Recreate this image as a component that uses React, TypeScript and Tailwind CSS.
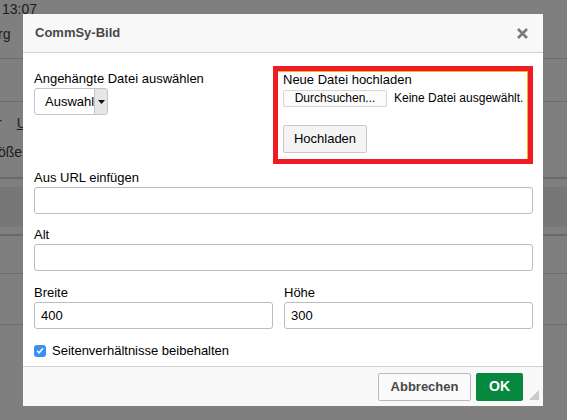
import React from "react";

function Field({ label, value, className = "" }: { label: string; value?: string; className?: string }) {
  return (
    <div className={className}>
      <div className="h-[15px] leading-[15px] text-[13px] text-black">{label}</div>
      <div className="mt-[2px] flex h-[27px] items-center rounded-[3px] border border-[#bcbcbc] bg-white px-[6px] text-[13px] text-black">
        {value}
      </div>
    </div>
  );
}

export default function App() {
  return (
    <div
      className="relative h-[420px] w-[567px] overflow-hidden bg-[#7f7f7f]"
      style={{ fontFamily: '"Liberation Sans", Arial, sans-serif' }}
    >
      {/* page behind the overlay */}
      <div className="flex flex-col text-[13px] text-[#1c1c1c]">
        <div className="h-[58px] pl-[2px]">
          <div className="text-[14px] leading-[16px] pt-[1px]">13:07</div>
          <div className="mt-[9px] -ml-[4px] text-[14px] leading-[16px]">rg</div>
        </div>
        <div className="h-px bg-[#6a6a6a]" />
        <div className="h-[42px]" />
        <div className="h-px bg-[#6a6a6a]" />
        <div className="h-[75px]">
          <div className="mt-[16px] flex h-[16px] items-end text-[14px]">
            <span className="-ml-[3px]">r</span>
            <span className="ml-[15px] underline">U</span>
          </div>
          <div className="mt-[8px] -ml-[2px] text-[14px]">öße</div>
        </div>
        <div className="h-[2px] bg-[#6a6a6a]" />
        <div className="h-[8px]" />
        <div className="h-[40px] bg-[#777777]" />
        <div className="h-[7px]" />
        <div className="h-[2px] bg-[#6a6a6a]" />
        <div className="h-[37px]" />
        <div className="h-px bg-[#6a6a6a]" />
        <div className="h-[50px]" />
        <div className="h-px bg-[#6a6a6a]" />
      </div>

      {/* dialog */}
      <div className="absolute left-[23px] top-[14px] flex h-[392px] w-[520px] flex-col bg-white">
        <div className="flex h-[39px] shrink-0 items-center justify-between border-b border-[#d1d1d1] bg-[#f8f8f8] pl-[12px] pr-[15px]">
          <span className="text-[13px] font-bold text-[#484848]">CommSy-Bild</span>
          <svg width="11" height="11" viewBox="0 0 11 11">
            <path d="M1 1 L10 10 M10 1 L1 10" stroke="#7a7a7a" strokeWidth="2.6" />
          </svg>
        </div>

        <div className="flex-1 pl-[11px] pr-[10px] pt-[13px]">
          <div className="grid grid-cols-[239px_260px]">
            <div className="pt-[5px]">
              <div className="h-[15px] leading-[15px] text-[13px] text-black">Angehängte Datei auswählen</div>
              <div className="mt-[2px] flex h-[27px] w-[74px] overflow-hidden rounded-[3px] border border-[#c4c4c4] bg-white text-[13px] text-black">
                <div className="flex flex-1 items-center pl-[10px]">Auswahl</div>
                <div className="flex w-[13px] items-center justify-center border-l border-[#c4c4c4] bg-[#e6e6e6]">
                  <svg width="7" height="4" viewBox="0 0 7 4">
                    <path d="M0 0 H7 L3.5 4 Z" fill="#111" />
                  </svg>
                </div>
              </div>
            </div>

            <div className="border-[5px] border-[#ee1c25]">
              <div className="border-t border-r border-[#f3b820] pl-[5px] pb-[6px]">
                <div className="h-[15px] leading-[15px] text-[13px] text-black">Neue Datei hochladen</div>
                <div className="mt-[2px] flex items-center gap-[7px]">
                  <div className="flex h-[17px] w-[104px] items-center justify-center rounded-[2px] border border-[#d6d6d6] bg-[#fbfbfb] text-[12px] text-black">
                    Durchsuchen...
                  </div>
                  <span className="text-[12px] text-black">Keine Datei ausgewählt.</span>
                </div>
                <div className="mt-[18px] flex h-[28px] w-[84px] items-center justify-center rounded-[2px] border border-[#c8c8c8] bg-[#f4f4f4] text-[13px] text-black">
                  Hochladen
                </div>
              </div>
            </div>
          </div>

          <Field label="Aus URL einfügen" className="mt-[6px]" />
          <Field label="Alt" className="mt-[13px]" />

          <div className="mt-[14px] grid grid-cols-[239px_249px] gap-x-[11px]">
            <Field label="Breite" value="400" />
            <Field label="Höhe" value="300" />
          </div>

          <div className="mt-[12px] flex items-center gap-[6px]">
            <div className="flex h-[12px] w-[12px] items-center justify-center rounded-[3px] bg-[#3a8ef6]">
              <svg width="8" height="7" viewBox="0 0 8 7">
                <path d="M1 3.8 L3.1 5.8 L7 1.2" stroke="#fff" strokeWidth="1.5" fill="none" />
              </svg>
            </div>
            <span className="text-[13px] text-black">Seitenverhältnisse beibehalten</span>
          </div>
        </div>

        <div className="relative flex h-[40px] shrink-0 items-center justify-end gap-[5px] border-t border-[#d1d1d1] bg-[#f8f8f8] pr-[20px]">
          <div className="flex h-[28px] w-[93px] items-center justify-center rounded-[2px] border border-[#b9b9b9] bg-[#fafafa] text-[13px] font-bold text-[#484848]">
            Abbrechen
          </div>
          <div className="flex h-[28px] w-[47px] items-center justify-center rounded-[2px] bg-[#07883f] text-[14px] font-bold text-white">
            OK
          </div>
          <svg className="absolute bottom-[6px] right-[4px]" width="10" height="10" viewBox="0 0 10 10">
            <path d="M10 0 V10 H0 Z" fill="#c9c9c9" />
          </svg>
        </div>
      </div>
    </div>
  );
}
